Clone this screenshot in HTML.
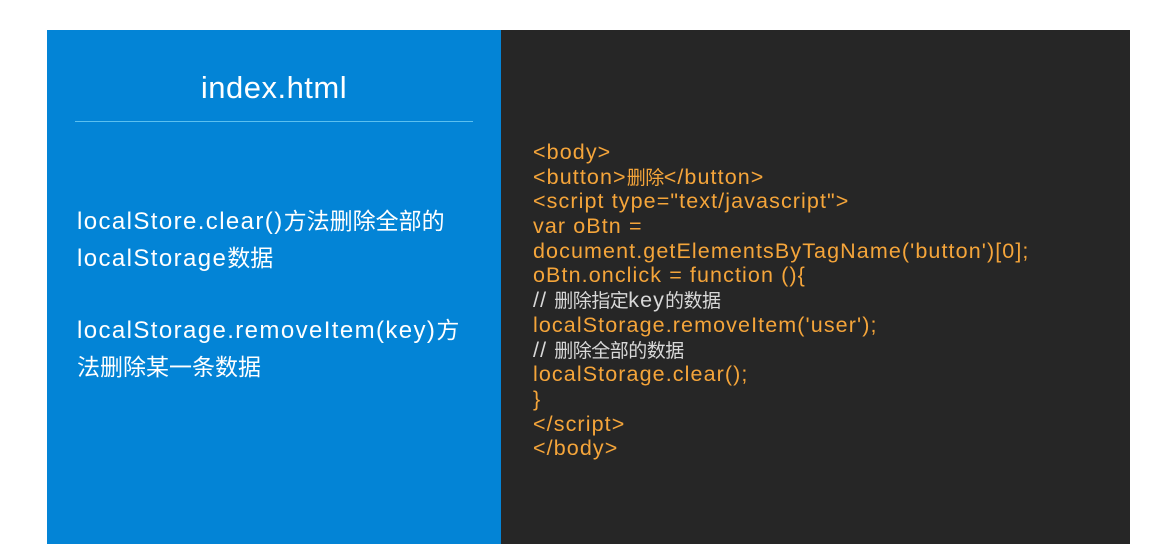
<!DOCTYPE html>
<html><head><meta charset="utf-8"><style>
body{margin:0;width:1150px;height:554px;background:#fff;position:relative;overflow:hidden;font-family:"Liberation Sans","Noto Sans CJK SC",sans-serif}
.l{position:absolute;left:47px;top:30px;width:454px;height:514px;background:#0384d6}
.r{position:absolute;left:501px;top:30px;width:629px;height:514px;background:#262626}
.t{position:absolute;left:47px;width:454px;top:69px;text-align:center;color:#fff;font-size:31px;line-height:38px;letter-spacing:0.5px}
.hr{position:absolute;left:75px;top:121px;width:398px;height:1px;background:#5bc0f0}
.p{position:absolute;left:77px;color:#fff;font-size:24px;letter-spacing:1.4px;white-space:nowrap}
.p div{height:37px;line-height:37px}
.p i{font-style:normal;font-size:23px;letter-spacing:0}
.c{position:absolute;left:533px;top:140px;color:#f5a53a;font-size:21.5px;white-space:pre;letter-spacing:1.1px}
.c div{height:24.7px;line-height:24.7px}
.c i{font-style:normal;font-size:19px;letter-spacing:-0.5px}
.g{color:#d8d8d8}
</style></head><body>
<div class="l"></div><div class="r"></div>
<div class="t">index.html</div>
<div class="hr"></div>
<div class="p" style="top:203px"><div>localStore.clear()<i>方法删除全部的</i></div><div>localStorage<i>数据</i></div></div>
<div class="p" style="top:312px"><div>localStorage.removeItem(key)<i>方</i></div><div><i>法删除某一条数据</i></div></div>
<div class="c"><div>&lt;body&gt;</div><div>&lt;button&gt;<i>删除</i>&lt;/button&gt;</div><div>&lt;script type="text/javascript"&gt;</div><div>var oBtn =</div><div>document.getElementsByTagName('button')[0];</div><div>oBtn.onclick = function (){</div><div class="g">// <i>删除指定</i>key<i>的数据</i></div><div>localStorage.removeItem('user');</div><div class="g">// <i>删除全部的数据</i></div><div>localStorage.clear();</div><div>}</div><div>&lt;/script&gt;</div><div>&lt;/body&gt;</div></div>
</body></html>
